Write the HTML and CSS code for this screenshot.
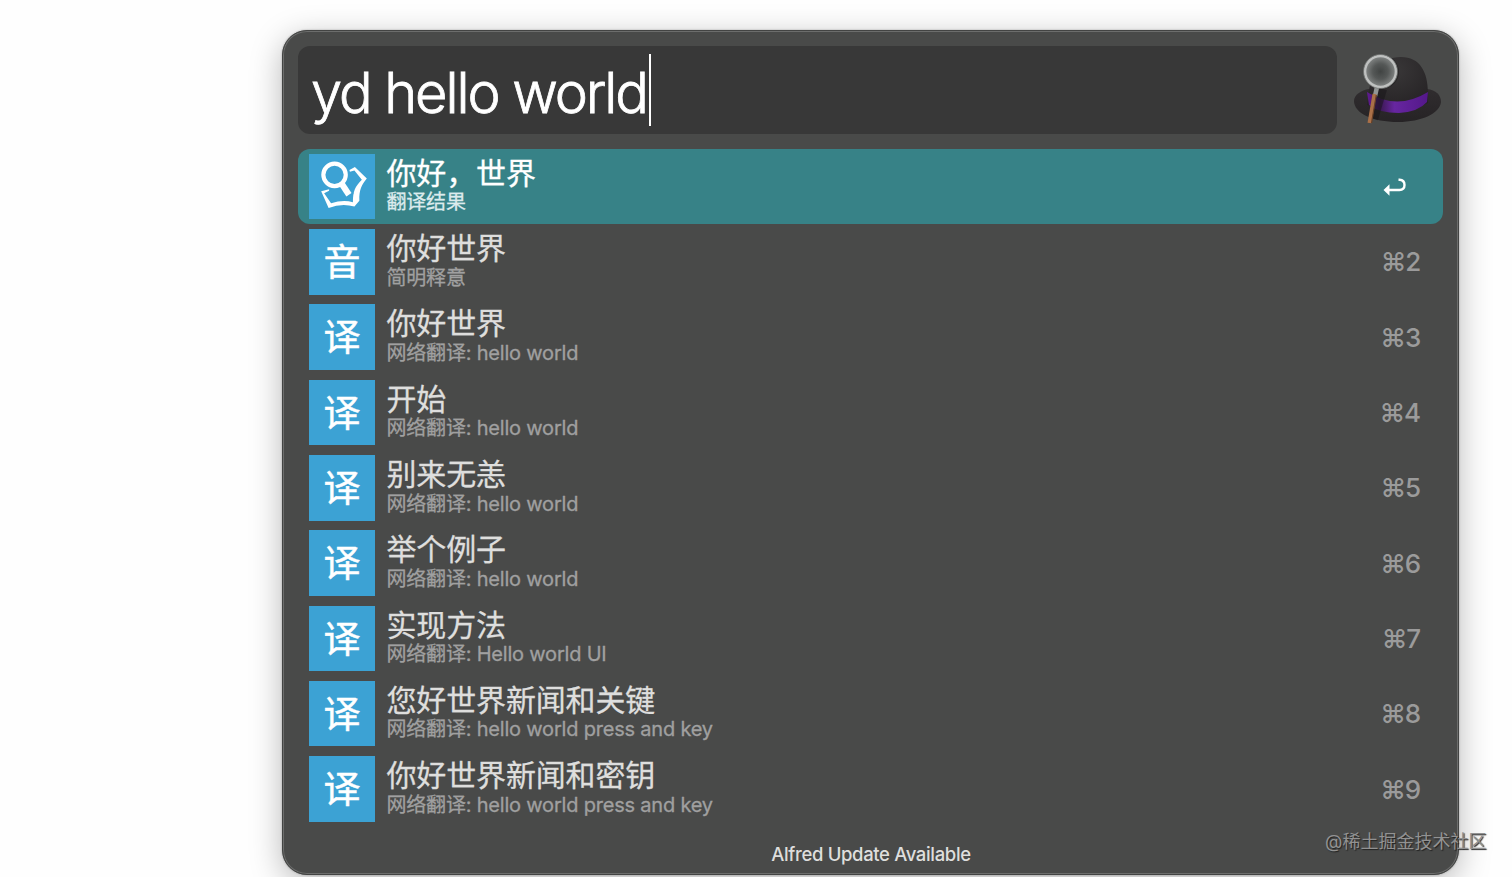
FILE: index.html
```
<!DOCTYPE html>
<html lang="zh-CN">
<head>
<meta charset="utf-8">
<title>Alfred</title>
<link rel="stylesheet" href="styles.css">
</head>
<body>
<main class="window">
  <header class="top">
    <div class="search"><span class="query">yd hello world</span><span class="caret"></span></div>
    <svg class="hat" width="92" height="76" viewBox="0 0 92 76">
      <defs>
        <radialGradient id="crown" cx=".45" cy=".25" r=".8"><stop offset="0" stop-color="#393738"/><stop offset="1" stop-color="#242123"/></radialGradient>
        <radialGradient id="glass"><stop offset="0" stop-color="#414443"/><stop offset=".5" stop-color="#555857"/><stop offset="1" stop-color="#858887"/></radialGradient>
        <linearGradient id="brim" x2="0" y2="1"><stop offset="0" stop-color="#302d2f"/><stop offset="1" stop-color="#262325"/></linearGradient>
        <linearGradient id="band"><stop offset="0" stop-color="#611b94"/><stop offset=".22" stop-color="#3c1955"/><stop offset=".45" stop-color="#6726a0"/><stop offset="1" stop-color="#54188a"/></linearGradient>
      </defs>
      <path d="M2 48C2 42 9 37 17 36H75C84 37 89 42 89 49C88 60 70 69 46 69C20 69 2 60 2 48Z" fill="url(#brim)"/>
      <path d="M16 46C18 20 28 4 49 4C68 4 76 19 76 40V50Q48 64 15 52Z" fill="url(#crown)"/>
      <path d="M15 39Q45 58 76 39L75 49Q66 59 47 60Q27 60 17 52Z" fill="url(#band)"/>
      <path d="M31 36L22 66" stroke="#171518" stroke-width="8" opacity=".5"/>
      <circle cx="30.500" cy="19" r="16.500" fill="#191919" opacity=".5"/>
      <path d="M25 34L23 43" stroke="#929594" stroke-width="4.500"/>
      <path d="M22.500 41L17.500 70" stroke="#aa7048" stroke-width="4"/>
      <path d="M24.300 42L19.500 70" stroke="#684027" stroke-width="1.200"/>
      <circle cx="28.500" cy="18.500" r="15.500" fill="url(#glass)" stroke="#bfc1c0" stroke-width="2.600"/>
      <circle cx="28.500" cy="18.500" r="17" fill="none" stroke="#777a79" stroke-width=".8"/>
    </svg>
  </header>
  <ul class="results">
    <li class="row selected">
      <svg class="icon" viewBox="0 0 66 66" fill="none" stroke="#fff">
        <path d="M40.500 16L46 13L58 24.700C53 31 50 36 50.500 47L45.500 53Q33 49 19.500 54.500L12 37.500L20 35.500V37L15 39.500L22 49.500Q34 46 44 48.500C44 38 46 33 53 26L45.500 16.500L41 18Z" fill="#fff" stroke="none"/>
        <path d="M32 29L41 42" stroke="#3ca2d4" stroke-width="9"/>
        <path d="M32 29L40 41" stroke-width="6.200"/>
        <circle cx="25.500" cy="21" r="11.300" fill="#3ca2d4" stroke-width="4.200"/>
      </svg>
      <div class="words"><div class="title">你好，世界</div><div class="sub">翻译结果</div></div>
      <svg class="enter" width="24" height="20" viewBox="0 0 24 20"><path d="M15.500 1.800H16.500Q21.500 2.200 21.500 7Q21.500 12 16.500 12H5" fill="none" stroke="#fff" stroke-width="2.400"/><path d="M.5 12L6.500 6.300V17.700Z" fill="#fff"/></svg>
    </li>
    <li class="row"><div class="icon">音</div><div class="words"><div class="title">你好世界</div><div class="sub">简明释意</div></div><span class="key">⌘2</span></li>
    <li class="row"><div class="icon">译</div><div class="words"><div class="title">你好世界</div><div class="sub">网络翻译: hello world</div></div><span class="key">⌘3</span></li>
    <li class="row"><div class="icon">译</div><div class="words"><div class="title">开始</div><div class="sub">网络翻译: hello world</div></div><span class="key">⌘4</span></li>
    <li class="row"><div class="icon">译</div><div class="words"><div class="title">别来无恙</div><div class="sub">网络翻译: hello world</div></div><span class="key">⌘5</span></li>
    <li class="row"><div class="icon">译</div><div class="words"><div class="title">举个例子</div><div class="sub">网络翻译: hello world</div></div><span class="key">⌘6</span></li>
    <li class="row"><div class="icon">译</div><div class="words"><div class="title">实现方法</div><div class="sub">网络翻译: Hello world UI</div></div><span class="key">⌘7</span></li>
    <li class="row"><div class="icon">译</div><div class="words"><div class="title">您好世界新闻和关键</div><div class="sub">网络翻译: hello world press and key</div></div><span class="key">⌘8</span></li>
    <li class="row"><div class="icon">译</div><div class="words"><div class="title">你好世界新闻和密钥</div><div class="sub">网络翻译: hello world press and key</div></div><span class="key">⌘9</span></li>
  </ul>
  <footer class="update">Alfred Update Available</footer>
</main>
<div class="watermark">@稀土掘金技术社区</div>
</body>
</html>
```
FILE: styles.css
```
* { box-sizing: border-box; }
html { height: 100%; overflow: hidden; background: #fefefe; }
body {
  height: 877px;
  margin: 0;
  padding: 30px 53px 0 282px;
  overflow: hidden;
  font-family: Inter, "Noto Sans CJK SC", sans-serif;
}
.window {
  height: 844.5px;
  padding: 14px 14px 0 15px;
  border: 1px solid #434443;
  border-radius: 25px;
  background: #494a49;
  box-shadow: inset 0 0 0 1px #6c6d6c, 0 0 2px rgba(0,0,0,.3), 0 8px 32px rgba(0,0,0,.28);
}
.top { display: flex; align-items: flex-start; height: 104px; padding-top: 1px; }
.search {
  display: flex;
  align-items: center;
  width: 1039px;
  height: 88px;
  padding-left: 13px;
  border-radius: 12px;
  background: #383838;
}
.query { font-size: 56px; font-weight: 350; line-height: 88px; letter-spacing: -2.1px; color: #fff; white-space: pre; padding-top: 5px; -webkit-text-stroke: .8px #fff; }
.caret { width: 2px; height: 72px; margin-left: 2px; background: #fff; }
.hat { margin: 7px 0 0 15px; flex: none; }
.results { margin: 0; padding: 0; list-style: none; }
.row {
  display: flex;
  align-items: center;
  width: 1145px;
  height: 75.3px;
  padding: 0 23px 0 11px;
  border-radius: 12px;
}
.selected { background: #378287; }
.icon {
  flex: none;
  width: 66px;
  height: 65.5px;
  background: #3ca2d4;
  color: #fff;
  font-size: 37px;
  line-height: 67px;
  text-align: center;
  -webkit-text-stroke: .5px #fff;
}
.words { flex: 1; margin-left: 11.5px; padding-top: 2px; white-space: pre; }
.title { height: 30.5px; line-height: 29.5px; font-size: 30px; letter-spacing: -.15px; color: #dededd; -webkit-text-stroke: .3px; }
.sub { height: 27px; line-height: 27px; font-size: 20px; letter-spacing: -.2px; color: #a0a0a0; -webkit-text-stroke: .3px; }
.selected .title { color: #fff; }
.selected .sub { color: #dcebed; }
.enter { margin-right: 13.5px; margin-top: 3px; }
.key { padding-top: 1px; font-size: 26px; font-weight: 500; line-height: 30px; letter-spacing: -1.2px; color: #9b9b9b; }
.update { margin-top: 13px; text-align: center; font-size: 18.5px; font-weight: 500; line-height: 28px; letter-spacing: -.35px; color: #dededd; }
.watermark {
  position: absolute;
  left: 1325px;
  top: 828px;
  font-size: 18px;
  line-height: 28px;
  color: #929292;
  text-shadow: 1px 1px 1px #222;
  white-space: nowrap;
}
```
